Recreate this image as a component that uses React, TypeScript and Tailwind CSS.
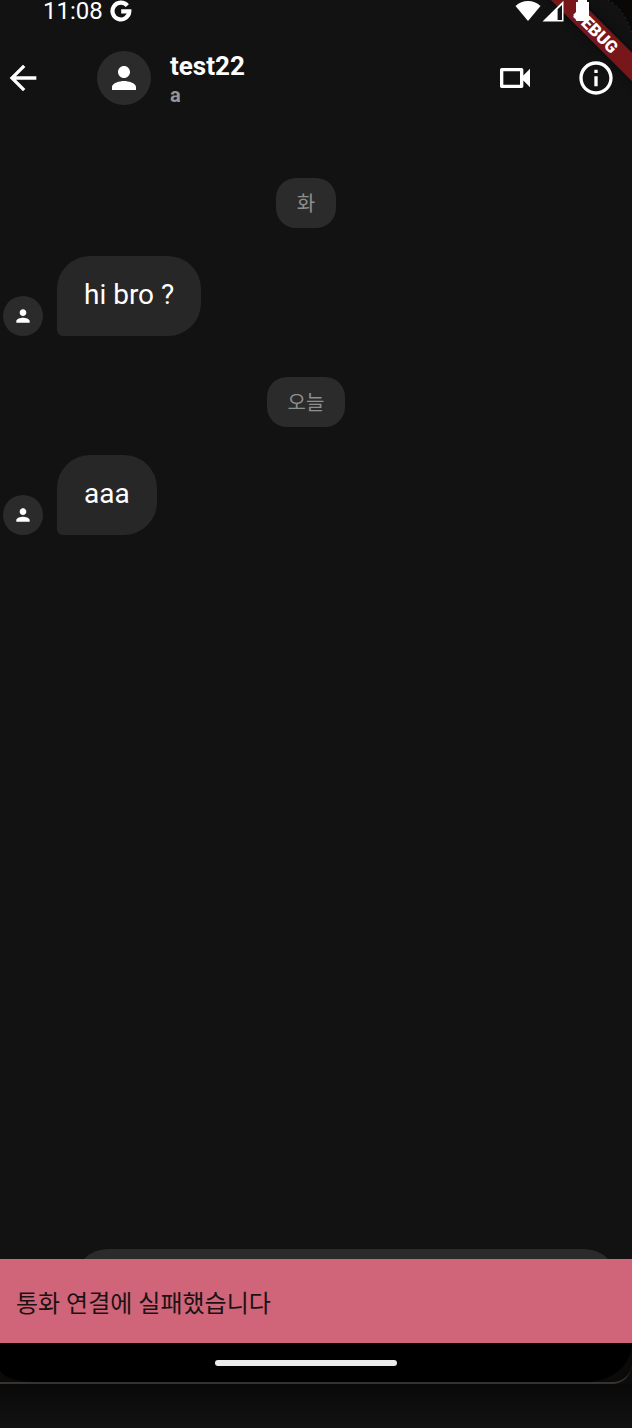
import { MdArrowBack, MdInfoOutline, MdOutlineVideocam, MdPerson } from "react-icons/md";

type Message = { id: number; day: string; text: string };

const messages: Message[] = [
  { id: 1, day: "화", text: "hi bro ?" },
  { id: 2, day: "오늘", text: "aaa" },
];

function GoogleMark() {
  return (
    <svg viewBox="0 0 22 22" className="size-[22px]" fill="none" stroke="#fff" strokeWidth="4.2" aria-hidden="true">
      <path d="M17.3 5.6A8.4 8.4 0 1 0 19.3 11.3H11.2" />
    </svg>
  );
}

function StatusIcons() {
  return (
    <svg viewBox="0 0 74 22" className="h-[22px] w-[74px]" aria-hidden="true">
      <path d="M0.5 6C7.5-0.6 18.5-0.6 25.5 6L13 21Z" fill="#fff" />
      <path d="M27.5 21.5 48.5 0.8V21.5Z" fill="#fff" />
      <path d="M42.6 9.2 47 5V20H42.6Z" fill="#121212" />
      <path d="M63 0H72V2H74V20Q74 21 73 21H62Q61 21 61 20V17L58 15L61 12V2H63Z" fill="#fff" />
    </svg>
  );
}

function DebugBanner() {
  return (
    <div className="pointer-events-none absolute top-0 right-0 size-[120px] overflow-hidden">
      <svg viewBox="0 0 24 34" className="absolute top-0 right-0 h-[34px] w-6" aria-hidden="true">
        <path d="M0 0Q17 9 24 34V0Z" fill="#090807" />
        <path d="M0 0Q17 9 24 34" fill="none" stroke="#4a4a4a" strokeWidth="0.8" strokeDasharray="1 4" />
      </svg>
      <div className="absolute top-[21px] -right-16 flex h-5 w-[200px] rotate-45 items-center justify-center bg-[#771719] text-[17px] leading-5 font-black text-white shadow-[0_0_10px_rgba(0,0,0,0.5)]">
        DEBUG
      </div>
    </div>
  );
}

function MessageRow({ message }: { message: Message }) {
  return (
    <li className="flex flex-col gap-7">
      <time className="mr-5 self-center rounded-[20px] bg-[#2b2b2b] px-[21px] pt-[11px] pb-[9px] text-[20px] leading-[30px] text-[#8e8e8e]">
        {message.day}
      </time>
      <div className="flex items-end gap-[14px] pl-[3px]">
        <span className="flex size-10 items-center justify-center rounded-full bg-[#2b2b2b]">
          <MdPerson className="size-5 text-white" aria-hidden="true" />
        </span>
        <p className="rounded-[33px] rounded-bl-[6px] bg-[#272727] px-[27px] pt-[19px] pb-[21px] text-[28px] leading-10 text-white">
          {message.text}
        </p>
      </div>
    </li>
  );
}

export default function App() {
  return (
    <div className="flex min-h-screen flex-col bg-[#0c0c0c] font-[Roboto,'Noto_Sans_CJK_KR',sans-serif]">
      <div className="relative flex flex-1 flex-col overflow-hidden rounded-br-[20px] border-b-2 border-[#343331] bg-[#0b0a09]">
        <div className="flex flex-1 flex-col bg-[#121212]">
          <DebugBanner />
          <div className="relative flex h-[22px] items-center justify-between pr-[43px] pl-[43px] text-white">
            <div className="flex items-center gap-[7px]">
              <span className="text-[24px] leading-[22px]">11:08</span>
              <GoogleMark />
            </div>
            <StatusIcons />
          </div>

          <header className="relative flex h-[111px] items-center pr-4 pl-[3px]">
            <button type="button" aria-label="뒤로" className="text-white">
              <MdArrowBack className="size-10" />
            </button>
            <span className="ml-[54px] flex size-[54px] items-center justify-center rounded-full bg-[#2b2b2b]">
              <MdPerson className="size-9 text-white" aria-hidden="true" />
            </span>
            <div className="ml-[19px] flex-1 pt-[3px]">
              <h1 className="text-[26px] leading-8 font-bold text-white">test22</h1>
              <p className="text-[20px] leading-[26px] font-bold text-[#969696]">a</p>
            </div>
            <div className="flex gap-[41px] text-white">
              <button type="button" aria-label="영상 통화">
                <MdOutlineVideocam className="size-10" />
              </button>
              <button type="button" aria-label="정보">
                <MdInfoOutline className="size-10" />
              </button>
            </div>
          </header>

          <main className="flex-1 pt-[45px]">
            <ul className="flex flex-col gap-[41px]">
              {messages.map((message) => (
                <MessageRow key={message.id} message={message} />
              ))}
            </ul>
          </main>

          <footer className="relative pr-[14px] pb-[26px] pl-[74px]">
            <input
              type="text"
              aria-label="메시지"
              className="block h-[68px] w-full rounded-[34px] bg-[#2b2b2b] px-7 text-[24px] text-white outline-none"
            />
            <div
              role="alert"
              className="absolute inset-x-0 bottom-0 bg-[#d06579] px-4 pt-[27px] pb-[21px] text-[24px] leading-9 text-[#1c1214]"
            >
              통화 연결에 실패했습니다
            </div>
          </footer>
        </div>

        <div className="flex h-[39px] items-center justify-center rounded-br-[45px_39px] rounded-bl-[36px_13px] bg-black pt-px pr-5">
          <span className="h-[6px] w-[182px] rounded-full bg-[#ececec]" />
        </div>
      </div>
      <div className="h-11 bg-linear-to-b from-[#090909] to-[#121212]" />
    </div>
  );
}
